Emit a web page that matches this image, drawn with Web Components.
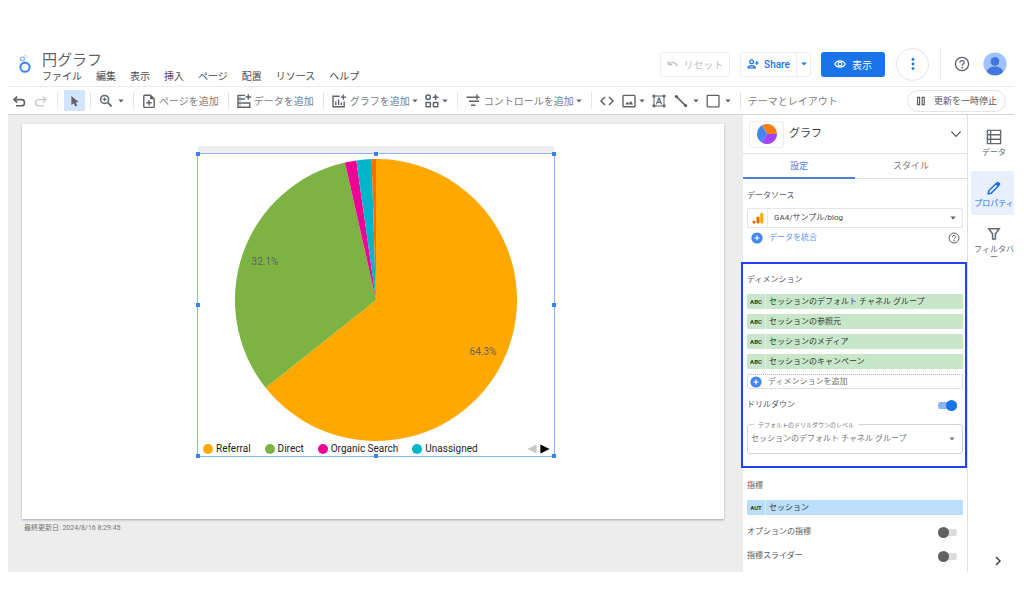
<!DOCTYPE html>
<html lang="ja">
<head>
<meta charset="utf-8">
<meta name="viewport" content="width=device-width, initial-scale=1">
<title>円グラフ</title>
<style>
  html { background: #fff; }
  body {
    margin: 0;
    min-height: 100vh;
    box-sizing: border-box;
    padding: 48px 10px 42px 8px;
    display: flex;
    flex-direction: column;
    font-family: Roboto, "Noto Sans CJK JP", sans-serif;
    font-size: 10px;
    color: #5f6368;
  }
</style>
</head>
<body>
<report-app></report-app>

<script>
const BASE = `
  *, *::before, *::after { box-sizing: border-box; }
  button, select, input { font: inherit; color: inherit; margin: 0; padding: 0; border: 0; background: none; }
  button { cursor: pointer; white-space: nowrap; }
  h1, h2, p { margin: 0; font: inherit; }
`;

function element(name, css, html) {
  const template = document.createElement('template');
  customElements.define(name, class extends HTMLElement {
    constructor() {
      super();
      this.attachShadow({ mode: 'open' });
    }
    connectedCallback() {
      if (this.shadowRoot.childNodes.length) return;
      template.innerHTML = `<style>${BASE}${css}</style>${typeof html === 'function' ? html(this) : html}`;
      this.shadowRoot.append(template.content.cloneNode(true));
    }
  });
}

/* ---------- icons ---------- */
const S = 'fill="none" stroke="currentColor"';
const ICONS = {
  logo: `<svg viewBox="0 0 14 20"><circle cx="7" cy="13.2" r="4.6" fill="none" stroke="#4285f4" stroke-width="2.1"/><circle cx="4.4" cy="5" r="2" fill="none" stroke="#7baaf7" stroke-width="1.2"/><circle cx="7.4" cy="2" r="1.4" fill="none" stroke="#c6dafc" stroke-width=".9"/></svg>`,
  undo: `<svg viewBox="0 0 16 16"><path d="M6.2 3.6 3 6.6l3.2 3M3.2 6.6h7.2a3.1 3.1 0 0 1 0 6.2H5" ${S} stroke-width="1.6"/></svg>`,
  redo: `<svg viewBox="0 0 16 16"><path d="M9.8 3.6l3.2 3-3.2 3M12.8 6.6H5.6a3.1 3.1 0 0 0 0 6.2H11" ${S} stroke-width="1.3"/></svg>`,
  cursor: `<svg viewBox="0 0 16 16"><path d="M4.4 3v9l2.2-1.8 1.7 3.2 1.9-1-1.6-3 3-.4z" fill="currentColor"/></svg>`,
  zoom: `<svg viewBox="0 0 16 16"><circle cx="6.6" cy="6.4" r="4" ${S} stroke-width="1.5"/><path d="M9.6 9.4 13.6 13.4" ${S} stroke-width="1.8"/><path d="M4.7 6.4h3.8M6.6 4.5v3.8" ${S} stroke-width="1.1"/></svg>`,
  page: `<svg viewBox="0 0 16 16"><path d="M9.4 2.2H3.8a1 1 0 0 0-1 1v10.2a1 1 0 0 0 1 1h8.4a1 1 0 0 0 1-1V6z" ${S} stroke-width="1.4"/><path d="M9 2v4.2h4.2z" fill="currentColor"/><path d="M8 7v5.4M5.3 9.7h5.4" ${S} stroke-width="1.4"/></svg>`,
  data: `<svg viewBox="0 0 16 16"><path d="M9 2.4H2v11.8h11.8V9.2M2 6h7M2 10h11.8" ${S} stroke-width="1.4"/><path d="M3.4 4.2h1.2M3.4 8h1.2M3.4 12.1h1.2" ${S} stroke-width="1"/><path d="M12.3 1.2v5.6M9.6 4h5.6" ${S} stroke-width="1.4"/></svg>`,
  chart: `<svg viewBox="0 0 16 16"><path d="M8.6 3.2H2v10.6h11.2V8.4" ${S} stroke-width="1.4"/><path d="M4.8 12V8.6M7.6 12V6.6M10.4 12V9.4" ${S} stroke-width="1.4"/><path d="M12.4 1.4v5.4M9.7 4.1h5.4" ${S} stroke-width="1.4"/></svg>`,
  widgets: `<svg viewBox="0 0 16 16"><g ${S} stroke-width="1.5"><circle cx="4.2" cy="4.2" r="2.2"/><rect x="2" y="9.6" width="4.4" height="4.2" rx=".5"/><rect x="9.4" y="9.6" width="4.4" height="4.2" rx=".5"/><path d="M11.6 1.4v5.6M8.8 4.2h5.6"/></g></svg>`,
  control: `<svg viewBox="0 0 16 16"><path d="M1.6 4.2h8M4 8.2h10M6 12.2h4.4M12 1.6v5.2M9.4 4.2h5.2" ${S} stroke-width="1.5"/></svg>`,
  code: `<svg viewBox="0 0 16 16"><path d="M6 4 2 8l4 4M10 4l4 4-4 4" ${S} stroke-width="1.5"/></svg>`,
  image: `<svg viewBox="0 0 16 16"><rect x="2" y="2.4" width="12" height="11.4" rx=".8" ${S} stroke-width="1.4"/><path d="M4.2 11.6l2.2-2.8 1.5 1.7 2-2.5 2.2 3.6z" fill="currentColor"/></svg>`,
  textbox: `<svg viewBox="0 0 16 16"><rect x="3" y="3" width="10" height="10" ${S} stroke-width="1"/><path d="M1.6 1.8h2.6v2.6H1.6zM11.8 1.8h2.6v2.6h-2.6zM1.6 11.6h2.6v2.6H1.6zM11.8 11.6h2.6v2.6h-2.6z" fill="currentColor"/><path d="M5.4 11.4 8 4.8l2.6 6.6M6.3 9.4h3.4" ${S} stroke-width="1.2"/></svg>`,
  line: `<svg viewBox="0 0 16 16"><path d="M3.4 3.6 12.6 12.6" ${S} stroke-width="1.6"/><circle cx="3.4" cy="3.6" r="1.7" fill="currentColor"/><circle cx="12.6" cy="12.6" r="1.7" fill="currentColor"/></svg>`,
  square: `<svg viewBox="0 0 16 16"><rect x="2.2" y="2.4" width="11.8" height="11.4" rx=".6" ${S} stroke-width="1.3"/></svg>`,
  caret: `<svg viewBox="0 0 6 6"><path d="M.4 1.6h5.2L3 4.4z" fill="currentColor"/></svg>`,
  pause: `<svg viewBox="0 0 10 10"><path d="M1.6 1.4h2v7.2h-2zM6.2 1.4h2v7.2h-2z" ${S} stroke-width="1.1"/></svg>`,
  reset: `<svg viewBox="0 0 12 12"><path d="M1.4 3.2v3.4h3.6M1.6 6.4c2.6-3 7-2.6 8.8 1.8" ${S} stroke-width="1.3"/></svg>`,
  share: `<svg viewBox="0 0 12 12"><g ${S} stroke-width="1.2"><circle cx="4.6" cy="3.8" r="1.9"/><path d="M1 9.8c0-3 7.2-3 7.2 0zM9.8 3v4M7.8 5h4"/></g></svg>`,
  eye: `<svg viewBox="0 0 12 12"><path d="M.8 6C2.6 1.8 9.4 1.8 11.2 6 9.4 10.2 2.6 10.2.8 6z" ${S} stroke-width="1.2"/><circle cx="6" cy="6" r="1.9" ${S} stroke-width="1.1"/></svg>`,
  dots: `<svg viewBox="0 0 16 16"><g fill="currentColor"><circle cx="8" cy="3.4" r="1.4"/><circle cx="8" cy="8" r="1.4"/><circle cx="8" cy="12.6" r="1.4"/></g></svg>`,
  help: `<svg viewBox="0 0 16 16"><circle cx="8" cy="8" r="6.6" ${S} stroke-width="1.3"/><path d="M5.9 6.6c0-2.8 4.3-2.7 4.3-.1 0 1.5-2.1 1.6-2.1 3.3" ${S} stroke-width="1.3"/><circle cx="8.1" cy="11.6" r=".9" fill="currentColor"/></svg>`,
  avatar: `<svg viewBox="0 0 24 24"><defs><clipPath id="c"><circle cx="12" cy="12" r="11.6"/></clipPath></defs><g clip-path="url(#c)"><path fill="#a0c3ff" d="M0 0h24v24H0z"/><circle cx="12" cy="9.4" r="4.3" fill="#4374e0"/><ellipse cx="12" cy="19" rx="7.8" ry="4.4" fill="#4374e0"/></g></svg>`,
  pie: `<svg viewBox="0 0 20 20"><path d="M10 10H20A10 10 0 0 0 5 1.34z" fill="#fa7b17"/><path d="M10 10 5 1.34a10 10 0 0 0 0 17.32z" fill="#4285f4"/><path d="M10 10 5 18.66A10 10 0 0 0 20 10z" fill="#a142f4"/></svg>`,
  chevronDown: `<svg viewBox="0 0 12 12"><path d="M1.4 3.6 6 8.4l4.6-4.8" ${S} stroke-width="1.3"/></svg>`,
  chevronRight: `<svg viewBox="0 0 12 12"><path d="M4 2l4 4-4 4" ${S} stroke-width="1.5"/></svg>`,
  analytics: `<svg viewBox="0 0 12 12"><rect x="8.2" y=".8" width="3.2" height="10.8" rx="1.5" fill="#f9ab00"/><rect x="4.4" y="4.6" width="3.2" height="7" rx="1.5" fill="#e8710a"/><circle cx="2" cy="10.1" r="1.6" fill="#e8710a"/></svg>`,
  add: `<svg viewBox="0 0 12 12"><circle cx="6" cy="6" r="5.6" fill="#4285f4"/><path d="M6 3.4v5.2M3.4 6h5.2" stroke="#fff" stroke-width="1.2"/></svg>`,
  table: `<svg viewBox="0 0 16 16"><path d="M1.4 1.4h13.2v13.2H1.4zM1.4 5.8h13.2M1.4 10.2h13.2M4.6 1.4v13.2" ${S} stroke-width="1.4"/></svg>`,
  pencil: `<svg viewBox="0 0 16 16"><path d="M2.2 13.8l.6-3L9.9 3.7l2.4 2.4-7.1 7.1z" ${S} stroke-width="1.5"/><path d="M9.6 3.4l1.4-1.4q1-.8 2 .2l.9.9q1 1 .1 2L12.6 6.4z" fill="currentColor"/></svg>`,
  filter: `<svg viewBox="0 0 16 16"><path d="M2.8 2.8h10.4L9.4 8v5H6.6V8z" ${S} stroke-width="1.5"/></svg>`,
  prev: `<svg viewBox="0 0 10 10"><path d="M9.6.4v9.2L.4 5z" fill="#c8c8c8"/></svg>`,
  next: `<svg viewBox="0 0 10 10"><path d="M.4.4v9.2L9.6 5z" fill="#000"/></svg>`
};

element('ls-icon', `
  :host { display: inline-block; flex: none; width: 16px; height: 16px; }
  :host([size="6"]) { width: 6px; height: 6px; }
  :host([size="10"]) { width: 10px; height: 10px; }
  :host([size="12"]) { width: 12px; height: 12px; }
  :host([size="20"]) { width: 20px; height: 20px; }
  :host([size="24"]) { width: 24px; height: 24px; }
  svg { display: block; width: 100%; height: 100%; }
`, el => ICONS[el.getAttribute('name')].replace('<svg', '<svg aria-hidden="true"'));

/* ---------- header ---------- */
element('app-header', `
  :host { display: flex; height: 39px; border-bottom: 1px solid #e8eaed; padding: 0 7px 0 10px; }
  .logo { width: 14px; height: 20px; margin: 6px 10px 0 0; }
  .titles { flex: 1; padding-top: 3px; }
  h1 { font-size: 15px; line-height: 19px; color: #5f6368; }
  nav { display: flex; gap: 14px; color: #484b4f; line-height: 14px; }
  .actions { display: flex; align-items: center; height: 32px; }
  .actions > * { flex: none; }
  .outline { height: 25px; border: 1px solid #eceef0; border-radius: 3px; display: flex; align-items: center; justify-content: center; }
  .reset { width: 70px; gap: 5px; color: #bdc1c6; margin-right: 10px; }
  .share { color: #1a73e8; width: 71px; margin-right: 10px; font-weight: 500; }
  .share button { height: 23px; display: flex; align-items: center; justify-content: center; }
  .share .main { flex: 1; gap: 5px; }
  .share .drop { width: 14px; border-left: 1px solid #eceef0; }
  .view { width: 64px; height: 25px; border-radius: 3px; background: #1a73e8; color: #fff; display: flex; align-items: center; justify-content: center; gap: 6px; }
  .more { width: 33px; height: 33px; margin: 0 11px; border: 1px solid #e3e5e8; border-radius: 50%; color: #1a73e8; display: grid; place-items: center; }
  .rule { width: 1px; height: 30px; background: #e8eaed; margin-right: 13px; }
  .round { display: grid; margin-right: 13px; }
  .round:last-child { margin: 0; }
`, `
  <ls-icon class="logo" name="logo"></ls-icon>
  <div class="titles">
    <h1>円グラフ</h1>
    <nav>
      <button>ファイル</button><button>編集</button><button>表示</button><button>挿入</button><button>ページ</button><button>配置</button><button>リソース</button><button>ヘルプ</button>
    </nav>
  </div>
  <div class="actions">
    <button class="outline reset" disabled><ls-icon name="reset" size="12"></ls-icon>リセット</button>
    <div class="outline share">
      <button class="main"><ls-icon name="share" size="12"></ls-icon>Share</button>
      <button class="drop" aria-label="共有オプション"><ls-icon name="caret" size="6"></ls-icon></button>
    </div>
    <button class="view"><ls-icon name="eye" size="12"></ls-icon>表示</button>
    <button class="more" aria-label="その他"><ls-icon name="dots"></ls-icon></button>
    <span class="rule"></span>
    <button class="round" aria-label="ヘルプ"><ls-icon name="help"></ls-icon></button>
    <button class="round" aria-label="アカウント"><ls-icon name="avatar" size="24"></ls-icon></button>
  </div>
`);

/* ---------- toolbar ---------- */
element('tool-button', `
  :host { display: block; flex: none; }
  button { display: flex; align-items: center; gap: 2px; height: 21px; color: #5f6368; }
  .label { color: #7b8085; padding-left: 1px; }
  .label:first-of-type:last-child { padding-left: 0; }
  ls-icon + .label:last-child { padding-left: 1px; }
  :host([menu="wide"]) button { gap: 4px; }
  :host([active]) button { width: 21px; justify-content: center; background: #d2e3fc; border-radius: 1px; }
  :host([disabled]) button { color: #c4c7ca; }
`, el => `<button ${el.hasAttribute('disabled') ? 'disabled' : ''} aria-label="${el.getAttribute('label') || el.textContent}">
  ${el.hasAttribute('icon') ? `<ls-icon name="${el.getAttribute('icon')}"></ls-icon>` : ''}
  ${el.textContent ? '<span class="label"><slot></slot></span>' : ''}
  ${el.hasAttribute('menu') ? '<ls-icon name="caret" size="6"></ls-icon>' : ''}
</button>`);

element('app-toolbar', `
  :host { display: flex; align-items: center; height: 28px; padding: 0 8px 0 3px; border-bottom: 1px solid #d3d3d3; }
  .group { display: flex; align-items: center; gap: 6px; }
  .group + .group::before { content: ""; width: 1px; height: 17px; background: #e4e6e8; margin: 0 1px 0 9px; }
  .group + .tight::before { margin: 0 0 0 8px; }
  .tight + .group::before { margin-left: 5px; }
  .pause { margin-left: auto; height: 22px; width: 99px; border: 1px solid #e3e5e8; border-radius: 11px; display: flex; align-items: center; justify-content: center; gap: 8px; font-size: 9px; color: #55585c; }
`, `
  <div class="group"><tool-button icon="undo" label="元に戻す"></tool-button><tool-button icon="redo" label="やり直す" disabled></tool-button></div>
  <div class="group tight"><tool-button icon="cursor" label="選択" active></tool-button></div>
  <div class="group"><tool-button icon="zoom" label="ズーム" menu="wide"></tool-button></div>
  <div class="group"><tool-button icon="page">ページを追加</tool-button></div>
  <div class="group"><tool-button icon="data">データを追加</tool-button></div>
  <div class="group"><tool-button icon="chart" menu>グラフを追加</tool-button><tool-button icon="widgets" label="ビジュアリゼーション" menu></tool-button></div>
  <div class="group"><tool-button icon="control" menu>コントロールを追加</tool-button></div>
  <div class="group"><tool-button icon="code" label="URL の埋め込み"></tool-button><tool-button icon="image" label="画像" menu></tool-button><tool-button icon="textbox" label="テキスト"></tool-button><tool-button icon="line" label="線" menu="wide"></tool-button><tool-button icon="square" label="図形" menu="wide"></tool-button></div>
  <div class="group"><tool-button>テーマとレイアウト</tool-button></div>
  <button class="pause"><ls-icon name="pause" size="10"></ls-icon>更新を一時停止</button>
`);

/* ---------- chart ---------- */
const SLICES = [
  { name: 'Referral', share: 64.3, color: '#ffa800' },
  { name: 'Direct', share: 32.17, color: '#7cb342' },
  { name: 'Organic Search', share: 1.3, color: '#f10096' },
  { name: 'Unassigned', share: 1.74, color: '#00b6cb' },
  { name: '', share: 0.49, color: '#ff6d00' }
];

element('pie-chart', `
  :host { display: flex; flex-direction: column; border: 1px solid #8ab4f8; background: #fff; }
  .plot { display: block; width: 100%; flex: 1; min-height: 0; }
  .plot text { font-size: 10px; fill: #5f6368; text-anchor: middle; }
  .legend { display: flex; align-items: center; gap: 14px; height: 14px; padding: 0 4px 0 5px; color: #222; }
  .key { display: flex; align-items: center; gap: 3px; line-height: 12px; }
  .key i { width: 10px; height: 10px; border-radius: 50%; }
  .pager { margin-left: auto; display: flex; gap: 3px; }
  .pager button { display: grid; }
  .handle { position: absolute; width: 4px; height: 4px; margin: -2px; background: #3b82ec; }
`, () => {
  const cx = 178, cy = 146, r = 141;
  let at = 0;
  const point = share => {
    const a = share / 50 * Math.PI;
    return `${(cx + r * Math.sin(a)).toFixed(2)} ${(cy - r * Math.cos(a)).toFixed(2)}`;
  };
  const paths = SLICES.map(s => {
    const from = point(at);
    at += s.share;
    return `<path d="M${cx} ${cy}L${from}A${r} ${r} 0 ${s.share > 50 ? 1 : 0} 1 ${point(at)}Z" fill="${s.color}"/>`;
  }).join('');
  const keys = SLICES.filter(s => s.name).map(s => `<span class="key"><i style="background:${s.color}"></i>${s.name}</span>`).join('');
  const handles = [0, 50, 100].flatMap(x => [0, 50, 100].map(y => x === 50 && y === 50 ? '' :
    `<span class="handle" style="left:${x}%;top:${y}%"></span>`)).join('');
  return `<svg class="plot" viewBox="0 0 356 288" role="img" aria-label="円グラフ">${paths}
      <text x="67" y="111">32.1%</text><text x="285" y="201">64.3%</text></svg>
    <div class="legend">${keys}<span class="pager"><button aria-label="前へ" disabled><ls-icon name="prev" size="10"></ls-icon></button><button aria-label="次へ"><ls-icon name="next" size="10"></ls-icon></button></span></div>${handles}`;
});

element('report-canvas', `
  :host { display: block; flex: 1; min-width: 0; background: #ededed; padding: 9px 19px 0 14px; }
  .paper { position: relative; aspect-ratio: 16 / 9; background: #fff; box-shadow: 0 1px 2px rgba(0,0,0,.3); }
  .strip { position: absolute; left: 176px; top: 22px; width: 356px; height: 7px; background: #eee; }
  pie-chart { position: absolute; left: 175px; top: 29px; width: 358px; height: 304px; }
  p { font-size: 7px; line-height: 10px; padding: 4px 2px; color: #757575; }
`, `
  <div class="paper"><div class="strip"></div><pie-chart></pie-chart></div>
  <p>最終更新日: 2024/8/16 8:29:45</p>
`);

/* ---------- properties panel ---------- */
element('field-chip', `
  :host { display: block; }
  button { display: flex; align-items: center; width: 100%; height: 15px; border-radius: 1px; background: #c8e6c9; color: #303a32; font-size: 8px; line-height: 15px; }
  :host([kind="metric"]) button { background: #bbdefb; }
  b { width: 19px; font-size: 6px; text-align: center; border-right: 1px solid rgba(255,255,255,.5); margin-right: 3px; }
`, el => `<button><b>${el.getAttribute('type')}</b><slot></slot></button>`);

element('toggle-row', `
  :host { display: flex; align-items: center; justify-content: space-between; height: 12px; padding-right: 6px; font-size: 8px; line-height: 12px; color: #55585c; }
  input { appearance: none; display: block; width: 19px; height: 11px; border-radius: 6px; background: linear-gradient(#dcdcdc, #dcdcdc) center / 100% 7px no-repeat; }
  input::before { content: ""; display: block; width: 11px; height: 11px; border-radius: 50%; background: #616161; }
  input:checked { background-image: linear-gradient(#8ab4f8, #8ab4f8); }
  input:checked::before { background: #1a73e8; margin-left: 8px; }
`, el => `<label for="t"><slot></slot></label><input id="t" type="checkbox" role="switch" ${el.hasAttribute('checked') ? 'checked' : ''}>`);

element('properties-panel', `
  :host { display: block; flex: none; width: 225px; border-right: 1px solid #e0e0e0; background: #fff; font-size: 8px; line-height: 12px; color: #55585c; position: relative; }
  .head { display: flex; align-items: center; height: 39px; border-bottom: 1px solid #e0e0e0; padding: 0 5px 0 6px; }
  .type { width: 35px; height: 27px; border: 1px solid #eceef0; border-radius: 3px; display: grid; place-items: center; margin-right: 5px; }
  h2 { flex: 1; font-size: 11px; line-height: 16px; color: #3c4043; }
  .head > button:last-child { display: grid; }
  .tabs { display: grid; grid-template-columns: 1fr 1fr; height: 25px; border-bottom: 1px solid #e0e0e0; font-size: 9px; }
  .tabs button { border-bottom: 2px solid transparent; margin-bottom: -1px; color: #757575; }
  .tabs [aria-selected="true"] { color: #4c7fe0; border-color: #4c7fe0; }
  section { padding: 12px 4px 0; }
  .label { display: block; }
  .source { padding-top: 11px; }
  .field { position: relative; display: flex; align-items: center; border: 1px solid #e4e6e8; border-radius: 2px; margin-top: 6px; height: 20px; }
  .field > ls-icon[name="analytics"] { margin: 0 3px 0 4px; }
  .field > ls-icon[name="caret"] { margin-right: 6px; }
  select { appearance: none; flex: 1; min-width: 0; align-self: stretch; outline: 0; }
  .source select { border-left: 1px solid #e8eaed; padding-left: 6px; color: #444; }
  .blend { display: flex; align-items: center; justify-content: space-between; margin: 4px 3px 18px 4px; }
  .blend button { display: flex; align-items: center; gap: 6px; color: #5e97f6; }
  .highlight { border: 2px solid #1f41ff; margin-left: -2px; padding: 10px 2px 12px 4px; }
  .chips { display: grid; gap: 5px; margin: 8px 0 10px; }
  .add { display: flex; align-items: center; gap: 6px; height: 15px; border: 1px dotted #bdbdbd; border-radius: 2px; padding-left: 2px; color: #757575; }
  .outlined { height: 30px; margin-top: 13px; border-color: #d0d2d5; border-radius: 3px; color: #757575; }
  .outlined label { position: absolute; left: 6px; top: -6px; padding: 0 4px; background: #fff; font-size: 6px; }
  .outlined select { padding-left: 3px; }
  .outlined > ls-icon[name="caret"] { margin-right: 7px; }
  .rows { display: grid; gap: 12px; padding: 11px 0 10px; }
  .metrics .chips { margin-bottom: 0; }
`, `
  <div class="head">
    <button class="type" aria-label="グラフの種類"><ls-icon name="pie" size="20"></ls-icon></button>
    <h2>グラフ</h2>
    <button aria-label="開く"><ls-icon name="chevronDown" size="12"></ls-icon></button>
  </div>
  <div class="tabs" role="tablist">
    <button role="tab" aria-selected="true">設定</button><button role="tab" aria-selected="false">スタイル</button>
  </div>
  <section class="source">
    <label class="label" for="source">データソース</label>
    <div class="field"><ls-icon name="analytics" size="12"></ls-icon><select id="source"><option>GA4/サンプル/blog</option></select><ls-icon name="caret" size="6"></ls-icon></div>
    <div class="blend"><button><ls-icon name="add" size="12"></ls-icon>データを統合</button><ls-icon name="help" size="12"></ls-icon></div>
  </section>
  <section class="highlight">
    <span class="label">ディメンション</span>
    <div class="chips">
      <field-chip type="ABC">セッションのデフォルト チャネル グループ</field-chip>
      <field-chip type="ABC">セッションの参照元</field-chip>
      <field-chip type="ABC">セッションのメディア</field-chip>
      <field-chip type="ABC">セッションのキャンペーン</field-chip>
      <button class="add"><ls-icon name="add" size="12"></ls-icon>ディメンションを追加</button>
    </div>
    <toggle-row checked>ドリルダウン</toggle-row>
    <div class="field outlined">
      <label for="level">デフォルトのドリルダウンのレベル</label>
      <select id="level"><option>セッションのデフォルト チャネル グループ</option></select><ls-icon name="caret" size="6"></ls-icon>
    </div>
  </section>
  <section class="metrics">
    <span class="label">指標</span>
    <div class="chips"><field-chip type="AUT" kind="metric">セッション</field-chip></div>
    <div class="rows"><toggle-row>オプションの指標</toggle-row><toggle-row>指標スライダー</toggle-row></div>
  </section>
`);

/* ---------- side rail ---------- */
element('rail-item', `
  :host { display: block; }
  button { width: 100%; min-height: 44px; padding: 9px 0 0 3px; display: flex; flex-direction: column; align-items: center; gap: 3px; font-size: 8px; line-height: 8px; color: #666a6e; }
  span { width: 43px; text-align: center; white-space: normal; line-break: anywhere; padding-top: 1px; }
  :host([active]) button { background: #e8f0fe; border-radius: 2px 0 0 2px; color: #1a73e8; }
`, el => `<button><ls-icon name="${el.getAttribute('icon')}"></ls-icon><span><slot></slot></span></button>`);

element('side-rail', `
  :host { display: flex; flex-direction: column; gap: 2px; flex: none; width: 46px; padding: 5px 0 5px 3px; overflow: hidden; background: #fff; }
  rail-item:first-of-type { margin-bottom: 5px; }
  .collapse { margin: auto 10px 0 auto; display: grid; color: #444; }
`, `
  <rail-item icon="table">データ</rail-item>
  <rail-item icon="pencil" active>プロパティ</rail-item>
  <rail-item icon="filter">フィルタバー</rail-item>
  <button class="collapse" aria-label="パネルを閉じる"><ls-icon name="chevronRight" size="12"></ls-icon></button>
`);

element('report-app', `
  :host { display: flex; flex-direction: column; flex: 1; }
  main { display: flex; flex: 1; }
`, `
  <app-header></app-header>
  <app-toolbar></app-toolbar>
  <main><report-canvas></report-canvas><properties-panel></properties-panel><side-rail></side-rail></main>
`);
</script>
</body>
</html>
